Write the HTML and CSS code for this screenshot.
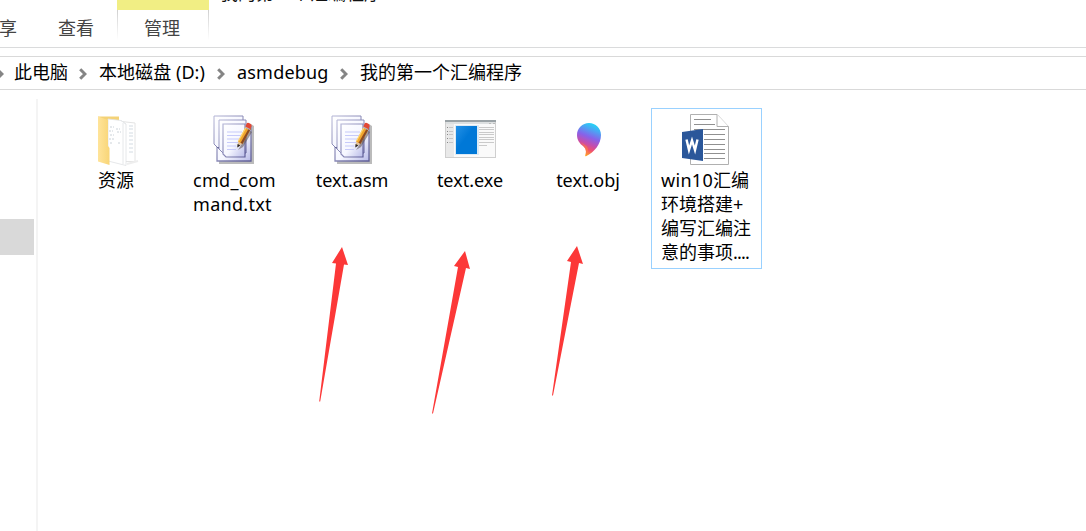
FILE: index.html
```html
<!DOCTYPE html>
<html lang="zh-CN">
<head>
<meta charset="utf-8">
<title>我的第一个汇编程序</title>
<link rel="stylesheet" href="styles.css">
</head>
<body>
<svg class="defs" width="0" height="0" aria-hidden="true">
  <defs>
    <linearGradient id="page" x1="0" y1="0" x2="1" y2="1"><stop offset="0" stop-color="#fff"/><stop offset=".55" stop-color="#f6f7ff"/><stop offset="1" stop-color="#b9bbe8"/></linearGradient>
    <linearGradient id="edge" x1="0" y1="0" x2="1" y2="1"><stop offset="0" stop-color="#b5b6d6"/><stop offset="1" stop-color="#5d5c96"/></linearGradient>
    <linearGradient id="folder" x1="0" y1="0" x2="1" y2="0"><stop offset="0" stop-color="#ffe49a"/><stop offset="1" stop-color="#f8d577"/></linearGradient>
    <linearGradient id="balloon" x1=".65" y1="0" x2=".35" y2="1"><stop offset="0" stop-color="#20d8f5"/><stop offset=".2" stop-color="#4da2f4"/><stop offset=".42" stop-color="#8762e9"/><stop offset=".62" stop-color="#c34eaf"/><stop offset=".78" stop-color="#f0506f"/><stop offset="1" stop-color="#ffb719"/></linearGradient>
    <linearGradient id="app" x1="0" y1="0" x2="1" y2="1"><stop offset="0" stop-color="#2591e6"/><stop offset=".45" stop-color="#0078d7"/><stop offset="1" stop-color="#0078d7"/></linearGradient>
    <symbol id="notes" viewBox="0 0 42 50">
      <path d="M6 46V49H41V11L38 9V46Z" fill="#777" opacity=".5"/>
      <path d="M4 12H38V46H4Z" fill="url(#page)" stroke="url(#edge)" stroke-width="1.3"/>
      <path d="M1 1H30V33H5L1 29Z" fill="url(#page)" stroke="url(#edge)"/>
      <path d="M4 32 6 34H8V32Z" fill="#4b4a80"/>
      <path d="M6 5H33V38H10L6 34Z" fill="url(#page)" stroke="url(#edge)"/>
      <path d="M10 9H32V42H13L10 39Z" fill="url(#page)" stroke="url(#edge)" stroke-width="1.2"/>
      <path d="M14 17H29M14 20.5H28M14 24H27M14 27.5H25M14 31H23M14 34.5H23" stroke="#c6cafa" stroke-width="1.2"/>
      <path d="M27 32 36 15 39 17 30 32 25 35Z" fill="#5b4e4b" opacity=".55"/>
      <path d="M25 27 33 11 38 13.5 29.5 29Z" fill="#f0a52e"/>
      <path d="M27.5 28 36 13 38 13.5 29.5 29Z" fill="#8a4a24"/>
      <path d="M25.5 26 33.5 11.5" stroke="#ffd66d" stroke-width="1.2"/>
      <path d="M25 27 29 29 24.5 32Z" fill="#e0c098"/><path d="M24.6 29 27.4 30.5 24.3 32.6Z" fill="#292322"/>
      <path d="M32.3 12 33.5 8.7Q34.5 7 37 8.5T38.3 12L37 14.5Z" fill="#e24835"/>
      <path d="M32 12 36.9 14.5" stroke="#b5b0bb" stroke-width="1.3"/>
    </symbol>
    <symbol id="chevron" viewBox="0 0 8 12"><path d="M1.2 1.2 6 6 1.2 10.8" fill="none" stroke="#858585" stroke-width="3"/></symbol>
  </defs>
</svg>

<header class="ribbon">
  <span class="tab tab-share">享</span>
  <span class="tab tab-view">查看</span>
  <span class="tab tab-manage">管理</span>
  <span class="window-title">我的第一个汇编程序</span>
</header>

<nav class="address">
  <svg class="chevron first"><use href="#chevron"/></svg>
  <span class="crumb crumb-pc">此电脑</span>
  <svg class="chevron"><use href="#chevron"/></svg>
  <span class="crumb crumb-drive">本地磁盘 (D:)</span>
  <svg class="chevron"><use href="#chevron"/></svg>
  <span class="crumb crumb-debug">asmdebug</span>
  <svg class="chevron"><use href="#chevron"/></svg>
  <span class="crumb">我的第一个汇编程序</span>
</nav>

<main class="body">
  <aside class="sidebar"><div class="sidebar-item"></div></aside>
  <section class="files">
    <div class="file">
      <svg class="icon" viewBox="0 0 56 56">
        <path d="M10 5.500H31V47H10Z" fill="#f4d277"/>
        <path d="M29 10 47 12V50.500H29Z" fill="#fff" stroke="#e4e4e4"/>
        <path d="M41 15H45M41 18H45M41 22H45M41 25H45M41 29H45M41 33H45M41 37H45M41 41H45" stroke="#d3dbe2"/>
        <path d="M20 8 33 9.500 38 13V54.500L20 50Z" fill="#fff" stroke="#e0e2e4" stroke-width=".8"/>
        <path d="M33 9.500 38 13M35 53V12" fill="none" stroke="#e6e8ea"/>
        <path d="M22 16H26M28 18H32M21 20H25M29 21H33M22 24H26M21 28H26M22 32H24M30 32H32" stroke="#cbd2d8" stroke-dasharray="2 1"/>
        <path d="M39 53 50 50" stroke="#eee" stroke-width="2"/>
        <path d="M10 5.500 20 9V35L21.500 37V54L10 50.500Z" fill="url(#folder)"/>
      </svg>
      <div class="name">资源</div>
    </div>
    <div class="file">
      <svg class="icon" viewBox="0 0 56 56"><use href="#notes" x="7" y="4" width="42" height="50"/></svg>
      <div class="name name-cmd">cmd_com<br>mand.txt</div>
    </div>
    <div class="file">
      <svg class="icon" viewBox="0 0 56 56"><use href="#notes" x="7" y="4" width="42" height="50"/></svg>
      <div class="name name-asm">text.asm</div>
    </div>
    <div class="file">
      <svg class="icon" viewBox="0 0 56 56" shape-rendering="crispEdges">
        <path d="M3 9H54V47H3Z" fill="#cfcfcf"/><path d="M4 12H53V46H4Z" fill="#fafafa"/>
        <path d="M3 9H54V11H3Z" fill="#9aa2a6"/><path d="M4 11H53V13H4Z" fill="#dde0e1"/>
        <path d="M4 13H12V46H4Z" fill="#e9e9e9"/>
        <path d="M5 16.500H6M5 20.500H6M5 23.500H6M5 27.500H6M5 31.500H6" stroke="#888"/>
        <path d="M7 16.500H11M7 20.500H11M7 23.500H11M7 27.500H11M7 31.500H11" stroke="#c6c6c6"/>
        <path d="M13 14H37V44H13Z" fill="#dceaf5"/>
        <path d="M14 15H35V43H14Z" fill="url(#app)"/>
        <path d="M37 16.500H52M37 18.500H52M37 21.500H52M37 23.500H52M37 26.500H52M37 28.500H52M37 31.500H52M37 34.500H45" stroke="#cacaca"/>
        <path d="M47 12H49M51 12H53" stroke="#bbb"/>
      </svg>
      <div class="name name-exe">text.exe</div>
    </div>
    <div class="file">
      <svg class="icon" viewBox="0 0 56 56">
        <path d="M29 12C35.500 12 41 17 41 24C41 33 34.500 41 26 45.300C25.300 45.400 25 45 25.300 44C26.500 40 26 38 23.500 35.500C19.500 32.500 17 29 17 24C17 17 22.500 12 29 12Z" fill="url(#balloon)"/>
        <path d="M21 31C25 35 29 34 28 42L26 45C26.800 40 25 37 23 34Z" fill="#ff8045" opacity=".6"/>
      </svg>
      <div class="name name-obj">text.obj</div>
    </div>
    <div class="file selected">
      <svg class="icon" viewBox="0 0 56 56">
        <path d="M12.500 3.500H39L50.500 15.500V53.500H12.500Z" fill="#fff" stroke="#b0b0b0"/>
        <path d="M39 3.500V15.500H50.500" fill="#fff" stroke="#b0b0b0"/>
        <path d="M16 8.500H33M16 13.500H37M16 18.500H47M26 23.500H47M26 28.500H47M26 33.500H47M26 38.500H47M26 42.500H47M26 47.500H47" stroke="#909090" stroke-width="1.200"/>
        <path d="M4 21 25 18V50L4 47Z" fill="#2b579a"/>
        <path d="M8.500 28.500 11 39 14 29.500 17 39 19.500 28.500" fill="none" stroke="#fff" stroke-width="2.400"/>
      </svg>
      <div class="name name-doc"><span class="win">win10</span>汇编<br>环境搭建<span>+</span><br>编写汇编注<br>意的事项<span class="dots">....</span></div>
    </div>
  </section>
</main>

<svg class="arrows" viewBox="0 0 1086 531">
  <path d="M342 247 348 265 344 264.5 320.2 401.5H319.2L336 263.5 332 263Z"/>
  <path d="M465 251 470 269 466 268 433 413.5H432L458 267 454 266Z"/>
  <path d="M577 246 583 264 579 263 553 395.5H552L571 262 567 261Z"/>
</svg>
</body>
</html>
```

FILE: styles.css
```css
* { box-sizing: border-box; }
body {
  margin: 0;
  width: 1086px;
  height: 531px;
  overflow: hidden;
  position: relative;
  background: #fff;
  color: #000;
  font-family: "Noto Sans", "Noto Sans CJK SC", sans-serif;
  font-size: 18px;
  font-weight: 400;
}
.defs { position: absolute; }
.ribbon {
  display: flex;
  height: 48px;
  overflow: hidden;
  border-bottom: 1px solid #dadbdc;
  color: #444;
}
.tab { height: 40px; line-height: 36px; padding-top: 10px; white-space: nowrap; }
.tab-share { width: 59px; margin-left: -1px; }
.tab-view { width: 59px; }
.tab-manage {
  width: 92px;
  padding: 0 0 0 27px;
  border-top: 10px solid #f1ee84;
  background: linear-gradient(#d0d0d0, #fff) left / 1px 100% no-repeat, linear-gradient(#d0d0d0, #fff) right / 1px 100% no-repeat;
}
.window-title { margin: -20px 0 0 11px; line-height: 26px; height: 26px; color: #111; }
.address {
  display: flex;
  align-items: center;
  height: 34px;
  margin-top: 8px;
  border-top: 1px solid #d9d9d9;
  border-bottom: 1px solid #d9d9d9;
  white-space: nowrap;
}
.chevron { width: 8px; height: 12px; margin: 1px 12px 0 11px; flex: none; }
.chevron.first { margin-left: -4px; margin-right: 10px; }
.crumb { height: 32px; line-height: 30px; }
.crumb-pc { width: 54px; }
.crumb-drive { width: 107px; letter-spacing: .05px; }
.crumb-debug { width: 92px; letter-spacing: .2px; }
.body { display: flex; height: 441px; padding-top: 9px; }
.sidebar { width: 38px; border-right: 2px solid #f4f4f4; padding-top: 120px; }
.sidebar-item { width: 34px; height: 36px; background: #d9d9d9; }
.files { display: flex; gap: 7px; padding: 9px 0 0 23px; align-items: flex-start; }
.file { width: 111px; height: 161px; padding: 2px 0 0; border: 1px solid transparent; }
.selected { border-color: #99d1ff; }
.icon { display: block; width: 56px; height: 56px; margin: 0 0 1px 26px; }
.name { line-height: 24px; padding-right: 1px; text-align: center; white-space: nowrap; }
.name-cmd { text-align: left; padding-left: 13px; letter-spacing: .3px; }
.name-doc { text-align: left; padding-left: 9px; }
.win { letter-spacing: .3px; }
.dots { letter-spacing: -.8px; }
.arrows { position: absolute; inset: 0; width: 1086px; height: 531px; fill: #fc3838; }
```
